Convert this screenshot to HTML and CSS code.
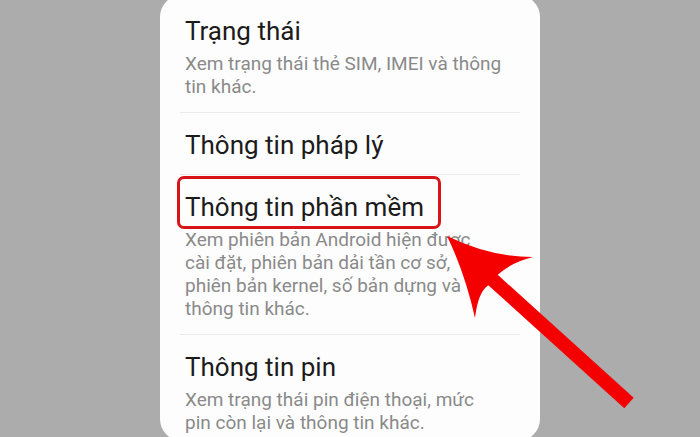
FILE: index.html
```html
<!DOCTYPE html>
<html lang="vi">
<head>
<meta charset="utf-8">
<title>Thông tin điện thoại</title>
<link rel="stylesheet" href="styles.css">
</head>
<body>
<div class="page">
  <div class="card">
    <ul class="list">
      <li class="item">
        <div class="title">Trạng thái</div>
        <div class="sub">Xem trạng thái thẻ SIM, IMEI và thông<br>tin khác.</div>
      </li>
      <li class="item">
        <div class="title">Thông tin pháp lý</div>
      </li>
      <li class="item">
        <div class="title highlight">Thông tin phần mềm</div>
        <div class="sub">Xem phiên bản Android hiện được<br>cài đặt, phiên bản dải tần cơ sở,<br>phiên bản kernel, số bản dựng và<br>thông tin khác.</div>
      </li>
      <li class="item">
        <div class="title">Thông tin pin</div>
        <div class="sub">Xem trạng thái pin điện thoại, mức<br>pin còn lại và thông tin khác.</div>
      </li>
    </ul>
  </div>
  <svg class="arrow" width="700" height="437" viewBox="0 0 700 437" xmlns="http://www.w3.org/2000/svg">
    <path d="M447 236 Q490 257 533 257 Q512 262 497.7 274.8 L633.7 397.8 L624.3 408.2 L488.3 285.2 Q478 292 475 318 Q465 273 447 236 Z" fill="#f50000"/>
  </svg>
</div>
</body>
</html>
```
FILE: styles.css
```css
html, body {
  margin: 0;
  padding: 0;
}
body {
  background: #acacac;
  font-family: Roboto, "Noto Sans", "Liberation Sans", sans-serif;
}
.page {
  position: relative;
  width: 700px;
  height: 437px;
  overflow: hidden;
}
.card {
  width: 380px;
  margin: -5px auto 0;
  padding-top: 4px;
  height: 446px;
  box-sizing: border-box;
  background: #fdfdfd;
  border-radius: 22px;
}
.list {
  list-style: none;
  margin: 0 20px;
  padding: 0;
}
.item {
  padding: 17px 0 14px 5px;
}
.item + .item {
  border-top: 1px solid #ebebeb;
}
.title {
  font-size: 26px;
  line-height: 30px;
  color: #1b1b1b;
}
.sub {
  margin-top: 6px;
  font-size: 19px;
  line-height: 23px;
  color: #8a8a8a;
}
.highlight {
  position: relative;
  display: inline-block;
}
.highlight::after {
  content: "";
  position: absolute;
  left: -8px;
  top: -16px;
  width: 264px;
  height: 53px;
  box-sizing: border-box;
  border: 3px solid #d81419;
  border-radius: 7px;
}
.arrow {
  position: absolute;
  left: 0;
  top: 0;
  pointer-events: none;
}
```
